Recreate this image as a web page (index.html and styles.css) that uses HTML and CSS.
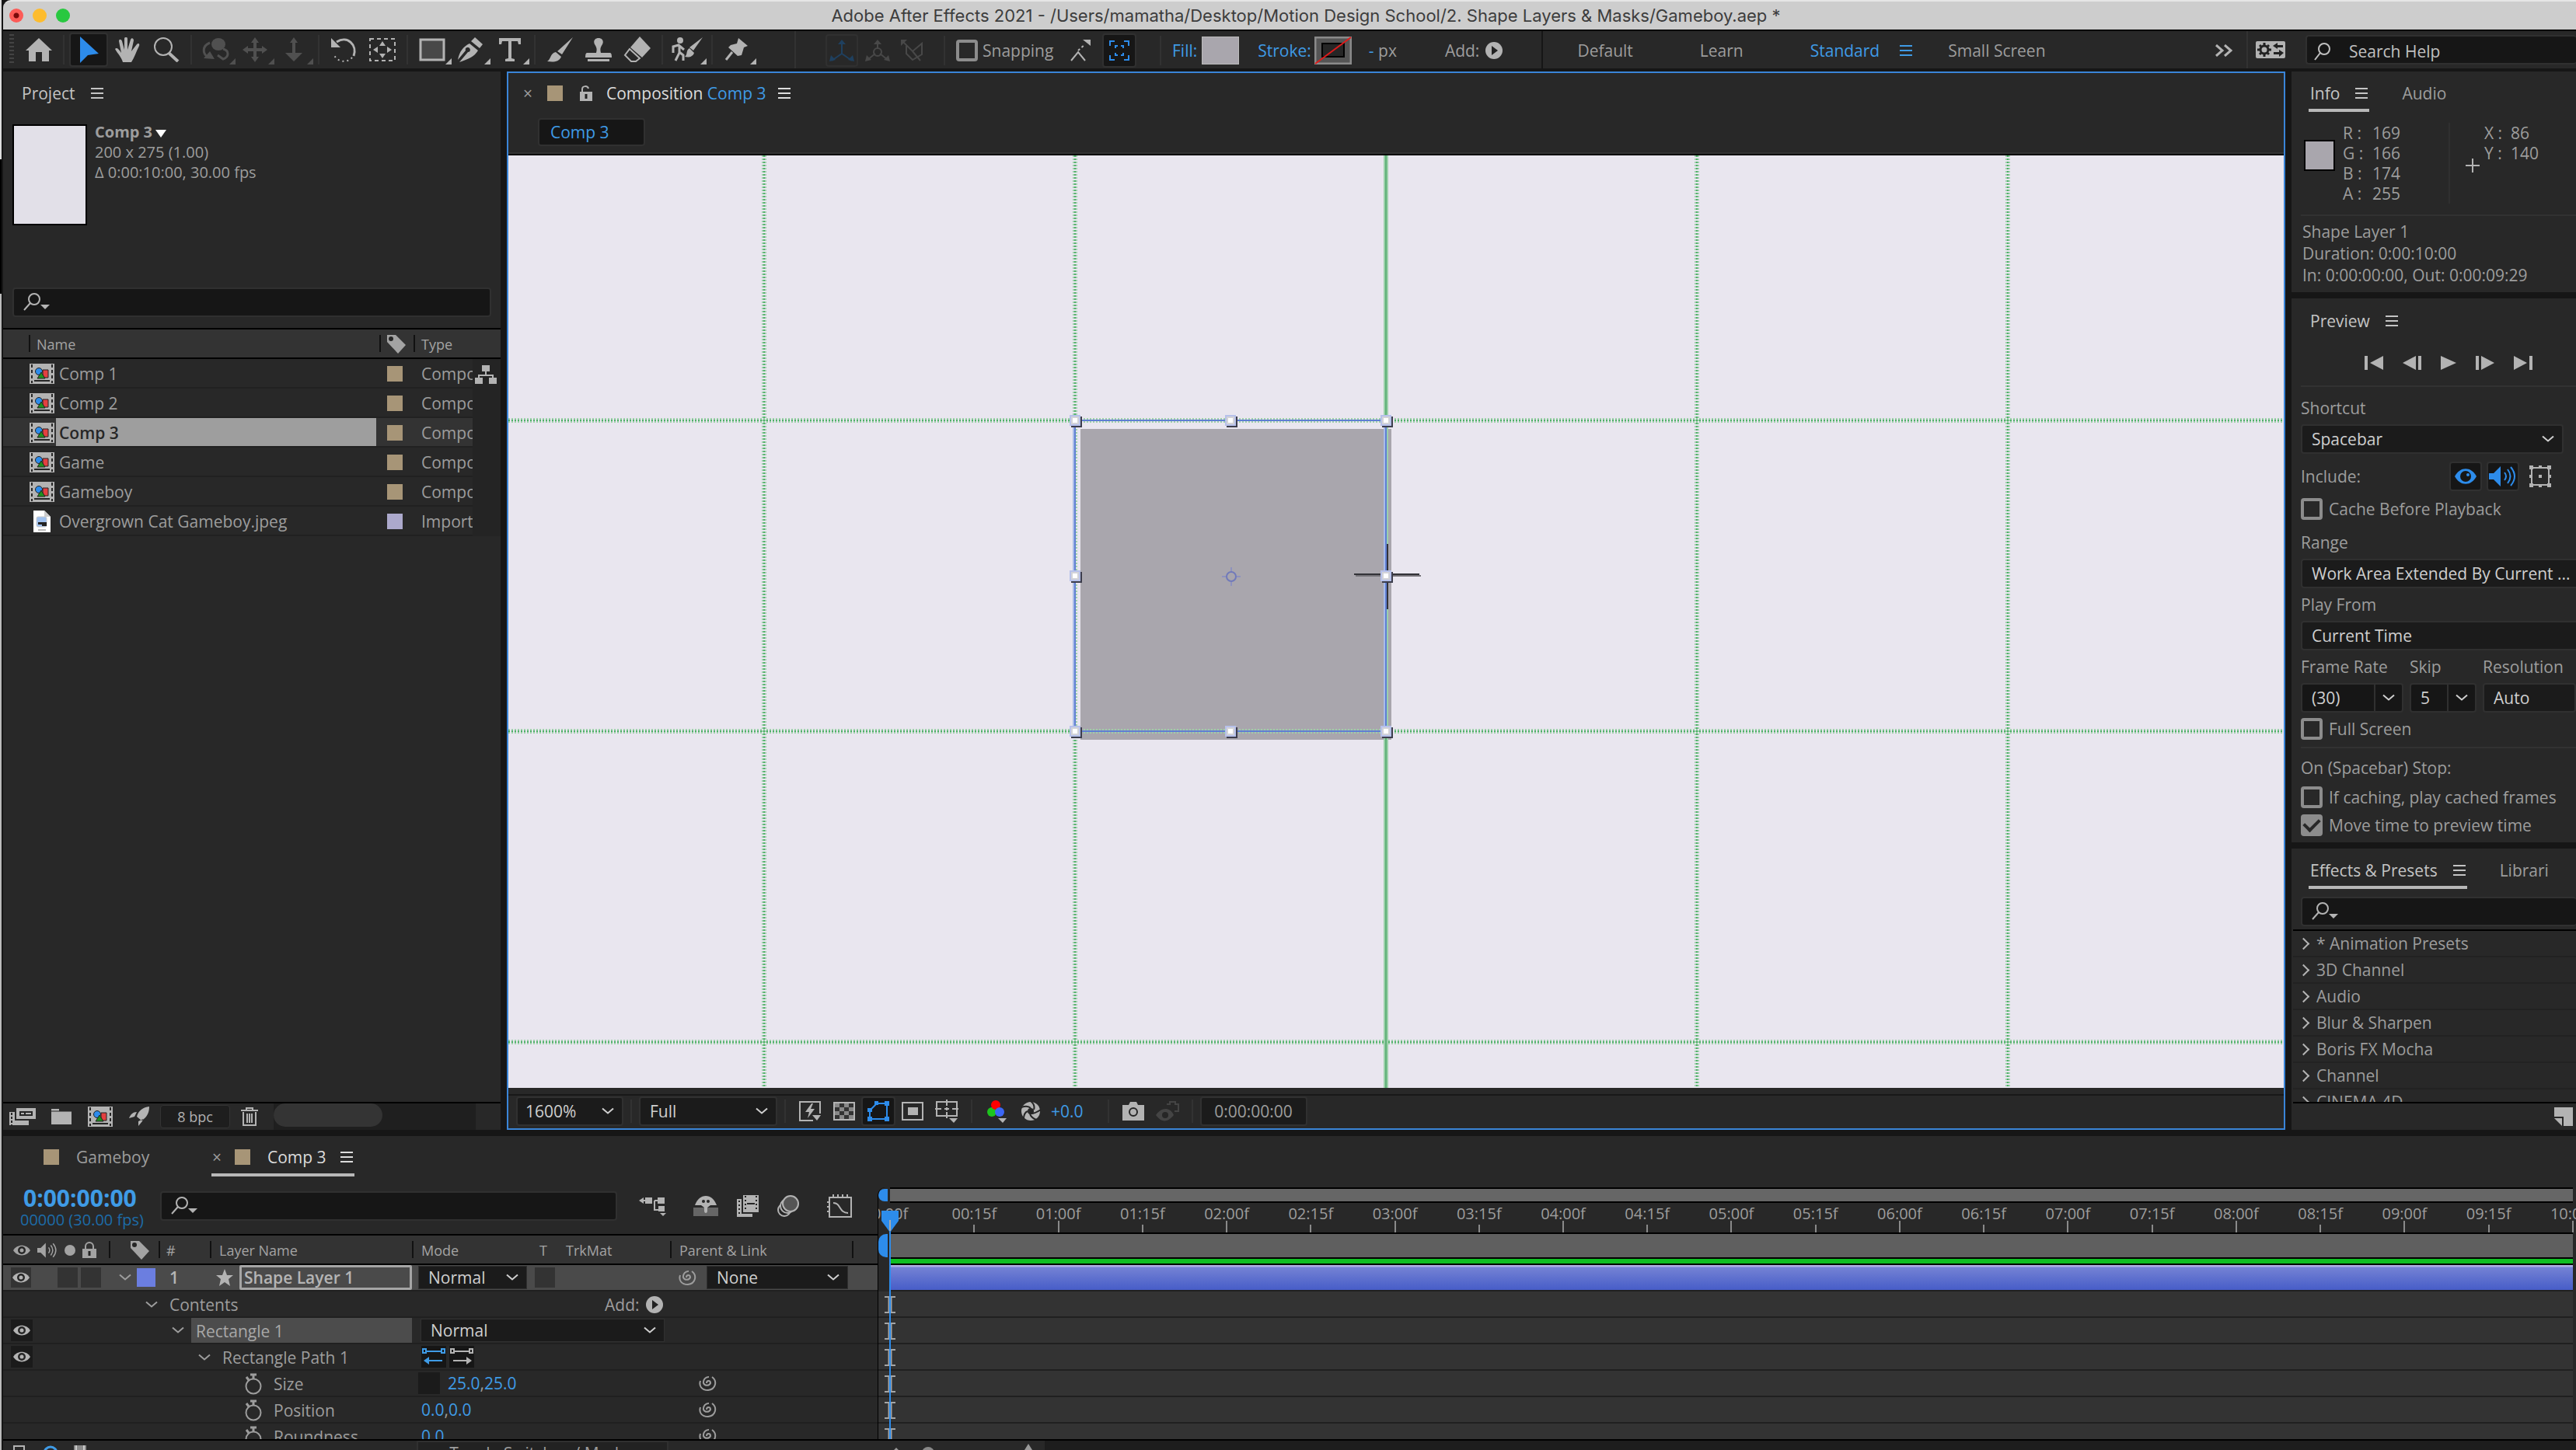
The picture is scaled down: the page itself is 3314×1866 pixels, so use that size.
FILE: index.html
```html
<!DOCTYPE html>
<html lang="en">
<head>
  <meta charset="UTF-8">
  <meta name="viewport" content="width=device-width, initial-scale=1.0">
  <title>Adobe After Effects 2021</title>
  <link rel="stylesheet" href="styles.css">
</head>
<body>
  <!-- shared icons -->
  <svg class="defs" aria-hidden="true">
    <symbol id="menu" viewBox="0 0 16 14"><path d="M0 1h16M0 7h16M0 13h16" stroke="currentColor" stroke-width="2"/></symbol>
    <symbol id="chev" viewBox="0 0 16 10"><path d="M1 1.5l7 6 7-6" fill="none" stroke="currentColor" stroke-width="2"/></symbol>
    <symbol id="search" viewBox="0 0 34 24"><circle cx="14" cy="8" r="7" fill="none" stroke="currentColor" stroke-width="2"/><path d="M9 13L1 22" stroke="currentColor" stroke-width="2"/><path d="M22 15h12l-6 6z" fill="currentColor"/></symbol>
    <symbol id="glass" viewBox="0 0 24 24"><circle cx="14" cy="9" r="7" fill="none" stroke="currentColor" stroke-width="2"/><path d="M9 14L2 23" stroke="currentColor" stroke-width="2"/></symbol>
    <symbol id="comp" viewBox="0 0 32 26"><path d="M0 0h32v26H0z" fill="#b3b3b3"/><path d="M3 1v24M29 1v24" stroke="#262626" stroke-width="2" stroke-dasharray="4 3"/><path d="M6 21h20v2H6z" fill="#262626"/><circle cx="12" cy="10" r="4.500" fill="#2d8ceb" stroke="#222"/><path d="M17 8h7v10h-7z" fill="#e34040" stroke="#222"/><path d="M15 11l5 8H10z" fill="#1f8f1f" stroke="#222"/></symbol>
    <symbol id="eye" viewBox="0 0 22 14"><path d="M0 7C5-1.500 17-1.500 22 7 17 15.500 5 15.500 0 7z" fill="currentColor"/><circle cx="11" cy="7" r="5" fill="#262626"/><circle cx="11" cy="7" r="2.500" fill="currentColor"/></symbol>
    <symbol id="speaker" viewBox="0 0 36 26"><path d="M0 9h6l9-9v26l-9-9H0z" fill="currentColor"/><path d="M20 8q4 5 0 10M24 4q7 9 0 18M28 1q10 12 0 24" fill="none" stroke="currentColor" stroke-width="2"/></symbol>
    <symbol id="tag" viewBox="0 0 24 24"><path d="M0 0h11l13 13-10 11L0 9z" fill="currentColor"/><circle cx="5" cy="5" r="3" fill="#262626"/></symbol>
    <symbol id="lock" viewBox="0 0 18 22"><path d="M0 9h18v12H0z" fill="currentColor"/><path d="M4 10V6a5 5 0 0 1 10 0v4" fill="none" stroke="currentColor" stroke-width="2"/><path d="M9 12v6" stroke="#222" stroke-width="3"/></symbol>
    <symbol id="whip" viewBox="0 0 24 22"><path d="M10 11a2.500 3 0 0 1 5 0a5 5 0 0 1-9 0a6.500 7 0 0 1 7-8M17 3c7 5 5 16-5 17C3 20 0 14 2 8" fill="none" stroke="currentColor" stroke-width="2"/></symbol>
    <symbol id="watch" viewBox="0 0 24 28"><circle cx="12" cy="17" r="9.500" fill="none" stroke="currentColor" stroke-width="2"/><path d="M8 2h8M12 2v6M3 5l3 4" stroke="currentColor" stroke-width="3"/></symbol>
    <symbol id="add" viewBox="0 0 22 22"><circle cx="11" cy="11" r="11" fill="currentColor"/><path d="M8 5l8 6-8 6z" fill="#222"/></symbol>
    <symbol id="corner" viewBox="0 0 8 8"><path d="M8 0v8H0z" fill="currentColor"/></symbol>
    <symbol id="beam" viewBox="0 0 14 22"><path d="M0 1h14M0 21h14" stroke="#a5a5a5" stroke-width="2"/><path d="M7 1v20" stroke="#a5a5a5" stroke-width="5"/></symbol>
    <symbol id="handle" viewBox="0 0 16 16"><path d="M2 2h14v14H2z" fill="#3c3d4c"/><path d="M0 0h14v14H0z" fill="#b7c1ea"/><path d="M2 2h10v10H2z" fill="#d3d3d8"/><path d="M4 4h6v6H4z" fill="#fff"/></symbol>
  </svg>

  <div class="app">
    <header class="titlebar">
      <div class="lights"><span class="light red"></span><span class="light yellow"></span><span class="light green"></span></div>
      <h1>Adobe After Effects 2021 - /Users/mamatha/Desktop/Motion Design School/2. Shape Layers &amp; Masks/Gameboy.aep *</h1>
    </header>

    <!-- tools -->
    <nav class="toolbar">
      <div class="tools">
        <button class="tool" aria-label="Home"><svg width="34" height="30"><path d="M17 0L0 16h4v14h9V18h8v12h9V16h4z" fill="currentColor"/></svg></button>
        <i class="sep"></i>
        <button class="tool active" aria-label="Selection"><svg width="26" height="34"><path d="M2 0l24 22-14 2L2 34z" fill="currentColor"/></svg></button>
        <button class="tool" aria-label="Hand"><svg width="32" height="32"><path d="M10 32C8 25 4 22 0 15c2-2 4-1 8 5L5 5c0-3 3-3 4 0l3 11V2c0-3 4-3 4 0v14l4-13c1-3 4-2 4 1l-3 14 7-9c2-2 4-1 3 2-4 8-6 15-10 21z" fill="currentColor"/></svg></button>
        <button class="tool" aria-label="Zoom"><svg width="34" height="32"><circle cx="13" cy="12" r="11" fill="none" stroke="currentColor" stroke-width="2"/><path d="M20 20l12 11" stroke="currentColor" stroke-width="4"/></svg></button>
        <i class="sep"></i>
        <button class="tool dim" aria-label="Orbit camera"><svg width="36" height="30"><ellipse cx="21" cy="8" rx="9" ry="8" fill="currentColor"/><path d="M10 6C0 10 0 20 8 25M27 14c8 2 8 10 0 13l-7-5" fill="none" stroke="currentColor" stroke-width="3"/><path d="M2 26l14 1-6-10z" fill="currentColor"/></svg><svg class="corner"><use href="#corner"/></svg></button>
        <button class="tool dim" aria-label="Pan camera"><svg width="32" height="32"><path d="M16 0l5 7h-3v7h7v-3l7 5-7 5v-3h-7v7h3l-5 7-5-7h3v-7H7v3l-7-5 7-5v3h7V7h-3z" fill="currentColor"/></svg><svg class="corner"><use href="#corner"/></svg></button>
        <button class="tool dim" aria-label="Dolly camera"><svg width="24" height="32"><path d="M12 0l5 7h-3v13h9l-11 11L1 20h9V7H7z" fill="currentColor"/></svg><svg class="corner"><use href="#corner"/></svg></button>
        <i class="sep"></i>
        <button class="tool" aria-label="Rotation"><svg width="34" height="32"><path d="M8 6c14-9 27 4 22 18" fill="none" stroke="currentColor" stroke-width="3"/><path d="M1 1v12h12z" fill="currentColor"/><path d="M28 26c-7 8-20 6-24-5" fill="none" stroke="currentColor" stroke-width="2" stroke-dasharray="2 4"/></svg></button>
        <button class="tool" aria-label="Anchor point"><svg width="34" height="30"><path d="M1 1h32v28H1z" fill="none" stroke="currentColor" stroke-width="2" stroke-dasharray="5 4"/><path d="M17 4l4 6h-8zM17 26l4-6h-8zM5 15l6-4v8zM29 15l-6-4v8z" fill="currentColor"/></svg></button>
        <i class="sep"></i>
        <button class="tool" aria-label="Rectangle"><svg width="34" height="30"><path d="M2 2h30v26H2z" fill="#484848" stroke="currentColor" stroke-width="3"/></svg><svg class="corner"><use href="#corner"/></svg></button>
        <button class="tool" aria-label="Pen"><svg width="34" height="32"><path d="M22 0l10 9-4 5-11-9zM15 8l11 9c-5 8-12 11-24 15l11-13a3 3 0 1 0-3-2L0 29C2 18 7 12 15 8z" fill="currentColor"/></svg><svg class="corner"><use href="#corner"/></svg></button>
        <button class="tool" aria-label="Type"><svg width="28" height="30"><path d="M0 0h28v8h-3l-1-4h-8v22l4 1v3H8v-3l4-1V4H4L3 8H0z" fill="currentColor"/></svg><svg class="corner"><use href="#corner"/></svg></button>
        <i class="sep"></i>
        <button class="tool" aria-label="Brush"><svg width="34" height="32"><path d="M34 0L20 22l-6-4zM12 19l7 6c-3 7-10 7-18 6 5-3 4-11 11-12z" fill="currentColor"/></svg></button>
        <button class="tool" aria-label="Clone stamp"><svg width="34" height="30"><path d="M17 0c5 0 7 4 5 8-3 5-3 6-2 11h12q2 0 2 6H0q0-6 2-6h12c1-5 1-6-2-11-2-4 0-8 5-8zM3 27h28v3H3z" fill="currentColor"/></svg></button>
        <button class="tool" aria-label="Eraser"><svg width="36" height="34"><path d="M21 0l14 15-11 12L9 14z" fill="currentColor"/><path d="M8 16l13 12-5 4h-6l-8-8z" fill="none" stroke="currentColor" stroke-width="2"/></svg></button>
        <i class="sep"></i>
        <button class="tool" aria-label="Roto brush"><svg width="40" height="32"><circle cx="11" cy="4" r="4" fill="currentColor"/><path d="M2 20V12l7-2 7 6M10 10v10l-5 10M10 19l5 4v7" fill="none" stroke="currentColor" stroke-width="3"/><path d="M40 0L28 17l-5-4zM23 14l6 6c-2 6-8 6-12 5 4-3 1-8 6-11z" fill="currentColor"/></svg><svg class="corner"><use href="#corner"/></svg></button>
        <i class="sep"></i>
        <button class="tool" aria-label="Puppet pin"><svg width="32" height="30"><path d="M18 0l12 10-5 2-3 10-5 1-12-11 3-3 8-2z" fill="currentColor"/><path d="M10 18L2 28" stroke="currentColor" stroke-width="3"/></svg><svg class="corner"><use href="#corner"/></svg></button>
      </div>

      <div class="tool-options">
        <button class="axis framed" aria-label="Local axis"><svg width="32" height="28"><path d="M16 18V4M16 18L3 27M16 18l13 9" stroke="currentColor" stroke-width="2"/><path d="M16 0l5 6H11zM0 28l2-8 6 6zM32 28l-2-8-6 6z" fill="currentColor"/></svg></button>
        <button class="axis" aria-label="World axis"><svg width="32" height="28"><path d="M16 12V4M13 18L3 26M19 18l10 8" stroke="currentColor" stroke-width="2"/><circle cx="16" cy="16" r="5" fill="none" stroke="currentColor" stroke-width="2"/><path d="M16 0l5 6H11zM0 28l2-8 6 6zM32 28l-2-8-6 6z" fill="currentColor"/></svg></button>
        <button class="axis" aria-label="View axis"><svg width="32" height="28"><path d="M3 3l12 12 12-10v14l-12 7-8-8V8M15 15l10 12" fill="none" stroke="currentColor" stroke-width="2"/><path d="M0 0h8L0 8z" fill="currentColor"/></svg></button>
        <i class="sep"></i>
        <label class="check snap"><input type="checkbox"> Snapping</label>
        <button class="icon-btn" aria-label="Snap edges"><svg width="26" height="28"><path d="M1 27l9-11 9 11" fill="none" stroke="currentColor" stroke-width="2"/><path d="M10 14l9-8" stroke="currentColor" stroke-width="2" stroke-dasharray="3 3"/><path d="M16 0h10v8z" fill="currentColor"/></svg></button>
        <button class="icon-btn pressed" aria-label="Snap features"><svg width="26" height="26"><path d="M1 7V1h6M19 1h6v6M25 19v6h-6M7 25H1v-6M8 10V7h3M15 7h3v3M18 16v3h-3M11 19H8v-3" fill="none" stroke="currentColor" stroke-width="2"/></svg></button>
        <i class="sep"></i>
        <a class="blue" href="#">Fill:</a>
        <span class="fill-swatch"></span>
        <a class="blue stroke-link" href="#">Stroke:</a>
        <svg class="stroke-swatch" width="48" height="36"><path d="M1 1h46v34H1z" fill="#555" stroke="#8a8a8a" stroke-width="3"/><path d="M10 9h28v17H10z" fill="#262626" stroke="#000" stroke-width="2"/><path d="M1 35L47 1" stroke="#e01b1b" stroke-width="2"/></svg>
        <span class="px"><a class="blue" href="#">-</a> px</span>
        <span class="add-label">Add: <svg width="22" height="22"><use href="#add"/></svg></span>
      </div>

      <div class="workspaces">
        <button class="ws ws-default">Default</button>
        <button class="ws ws-learn">Learn</button>
        <button class="ws ws-standard blue">Standard <svg width="16" height="14"><use href="#menu"/></svg></button>
        <button class="ws">Small Screen</button>
        <button class="ws more" aria-label="More workspaces"><svg width="22" height="16"><path d="M1 1l8 7-8 7M12 1l8 7-8 7" fill="none" stroke="currentColor" stroke-width="3"/></svg></button>
      </div>
      <div class="help">
        <button class="sync" aria-label="Workspace settings"><svg width="38" height="22"><rect width="38" height="22" rx="2" fill="#b3b3b3"/><circle cx="11" cy="11" r="5" fill="none" stroke="#222" stroke-width="3"/><path d="M11 2v3M11 17v3M2 11h3M17 11h3M5 5l2 2M17 5l-2 2M5 17l2-2M17 17l-2-2" stroke="#222" stroke-width="3"/><path d="M22 6l6-4v3h7v3h-7v2zM36 15l-6-4v3h-7v3h7v3z" fill="#222"/></svg></button>
        <label class="field help-field"><svg width="24" height="24"><use href="#glass"/></svg><input type="text" value="Search Help" aria-label="Search Help"></label>
      </div>
    </nav>

    <main class="workspace">
      <!-- project -->
      <section class="panel project">
        <div class="tabs"><h2 class="tab">Project <svg width="16" height="14"><use href="#menu"/></svg></h2></div>
        <div class="summary">
          <div class="thumb"></div>
          <div class="meta">
            <strong>Comp 3</strong><svg width="14" height="10"><path d="M0 0h14L7 10z" fill="#fff"/></svg><br>
            200 x 275 (1.00)<br>
            Δ 0:00:10:00, 30.00 fps
          </div>
        </div>
        <label class="field project-search"><svg width="34" height="24"><use href="#search"/></svg><input type="text" aria-label="Search project"></label>
        <table class="files">
          <colgroup><col class="f-icon"><col><col class="f-tag"><col class="f-type"><col class="f-flow"></colgroup>
          <thead>
            <tr><th></th><th>Name</th><th><svg width="24" height="24"><use href="#tag"/></svg></th><th colspan="2">Type</th></tr>
          </thead>
          <tbody>
            <tr><td><svg width="32" height="26"><use href="#comp"/></svg></td><td>Comp 1</td><td><span class="chip"></span></td><td>Composition</td><td class="flow"><svg width="28" height="24"><path d="M9 0h10v8H9zM0 16h10v8H0zM18 16h10v8H18z" fill="#b3b3b3"/><path d="M14 8v5M5 17v-4h18v4" fill="none" stroke="#b3b3b3" stroke-width="2"/></svg></td></tr>
            <tr><td><svg width="32" height="26"><use href="#comp"/></svg></td><td>Comp 2</td><td><span class="chip"></span></td><td>Composition</td><td></td></tr>
            <tr class="selected"><td><svg width="32" height="26"><use href="#comp"/></svg></td><td>Comp 3</td><td><span class="chip"></span></td><td>Composition</td><td></td></tr>
            <tr><td><svg width="32" height="26"><use href="#comp"/></svg></td><td>Game</td><td><span class="chip"></span></td><td>Composition</td><td></td></tr>
            <tr><td><svg width="32" height="26"><use href="#comp"/></svg></td><td>Gameboy</td><td><span class="chip"></span></td><td>Composition</td><td></td></tr>
            <tr><td><svg width="32" height="28"><path d="M5 0h14l8 8v20H5z" fill="#fff"/><path d="M19 0v8h8z" fill="#ccc"/><rect x="9" y="8" width="13" height="13" rx="2" fill="#9ec0ee" stroke="#ccc"/><path d="M11 15h11v3H11zM16 18h6v2h-6z" fill="#222"/><path d="M11 25h10" stroke="#bbb" stroke-width="2"/></svg></td><td>Overgrown Cat Gameboy.jpeg</td><td><span class="chip lilac"></span></td><td>Import</td><td></td></tr>
          </tbody>
        </table>
        <div class="files-space"></div>
        <div class="project-foot">
          <button aria-label="Interpret footage"><svg width="34" height="22"><path d="M9 0h25v14H9z" fill="#b3b3b3"/><path d="M13 4h17v6H13z" fill="#262626"/><path d="M15 6h4v2h-4zM21 6h7v2h-7z" fill="#b3b3b3"/><path d="M0 5h7v11h18v6H0z" fill="#b3b3b3"/><path d="M3 6v16" stroke="#262626" stroke-width="2" stroke-dasharray="3 2"/></svg></button>
          <button aria-label="New folder"><svg width="26" height="20"><path d="M0 0h10v3h16v17H0z" fill="#b3b3b3"/><path d="M0 3h26" stroke="#262626"/></svg></button>
          <button aria-label="New composition"><svg width="34" height="26"><use href="#comp"/></svg></button>
          <button aria-label="Project settings"><svg width="26" height="26"><path d="M26 0c-8 1-14 5-16 13l6 5c7-4 10-10 10-18zM10 7C5 7 2 10 0 15l7-2zM18 16l-1 3-5 6v-6z" fill="#b3b3b3"/></svg></button>
          <button class="bpc">8 bpc</button>
          <button aria-label="Delete"><svg width="22" height="24"><path d="M0 4h22M7 3V1h8v2M3 6v17h16V6M8 8v12M11 8v12M14 8v12" fill="none" stroke="#b3b3b3" stroke-width="2"/></svg></button>
          <div class="track"><div class="thumbbar"></div></div>
        </div>
      </section>

      <!-- composition viewer -->
      <section class="panel viewer">
        <div class="viewer-tab">
          <button class="close" aria-label="Close">×</button>
          <span class="chip tab-chip"></span>
          <svg class="unlock" width="16" height="20"><path d="M0 8h16v12H0z" fill="#b3b3b3"/><path d="M3 9V5c0-5 7-5 8-1" fill="none" stroke="#b3b3b3" stroke-width="2"/><path d="M8 11v6" stroke="#222" stroke-width="3"/></svg>
          <h2>Composition <a class="blue" href="#">Comp 3</a></h2>
          <svg width="16" height="14"><use href="#menu"/></svg>
        </div>
        <div class="crumbs"><button class="crumb">Comp 3</button></div>
        <div class="stage">
          <svg viewBox="0 0 2284 1200" preserveAspectRatio="xMidYMid slice">
            <path d="M0 0h2284v1200H0z" fill="#e9e6ef"/>
            <path d="M736 352h400v400H736z" fill="#a9a6ad"/>
            <g fill="none" stroke="#9dd0aa" stroke-width="6" stroke-dasharray="2 2"><path d="M329 0v1200M729 0v1200M1529 0v1200M1929 0v1200M0 341h2284M0 741h2284M0 1141h2284"/></g>
            <g fill="none" stroke="#4fae68" stroke-width="2" stroke-dasharray="2 2"><path d="M329 0v1200M729 0v1200M1529 0v1200M1929 0v1200M0 341h2284M0 741h2284M0 1141h2284"/></g>
            <path d="M1129 0v1200" stroke="#9dd0aa" stroke-width="6"/>
            <path d="M1129 0v1200" stroke="#5fb078" stroke-width="2"/>
            <path d="M729 341h400v400H729z" fill="none" stroke="#5f7fd3" stroke-width="2"/>
            <path d="M727 341v400M1127 341v400" stroke="#a9bce8" stroke-width="2"/>
            <path d="M1088 539h84M1131 500v84" stroke="#333338" stroke-width="2"/>
            <path d="M1090 541h84" stroke="#747278" stroke-width="2"/>
            <circle cx="930" cy="542" r="6" fill="none" stroke="#7079ba" stroke-width="2"/>
            <path d="M930 530v5M930 549v5M918 542h5M937 542h5" stroke="#8e92bd" stroke-width="2"/>
            <g>
              <use href="#handle" x="722" y="334" width="16" height="16"/><use href="#handle" x="922" y="334" width="16" height="16"/><use href="#handle" x="1122" y="334" width="16" height="16"/>
              <use href="#handle" x="722" y="534" width="16" height="16"/><use href="#handle" x="1122" y="534" width="16" height="16"/>
              <use href="#handle" x="722" y="734" width="16" height="16"/><use href="#handle" x="922" y="734" width="16" height="16"/><use href="#handle" x="1122" y="734" width="16" height="16"/>
            </g>
          </svg>
        </div>
        <div class="viewer-foot">
          <span class="select zoom-select"><select aria-label="Magnification"><option>1600%</option></select><svg width="16" height="10"><use href="#chev"/></svg></span>
          <i class="sep"></i>
          <span class="select res-select"><select aria-label="Resolution"><option>Full</option></select><svg width="16" height="10"><use href="#chev"/></svg></span>
          <i class="sep"></i>
          <button class="vbtn" aria-label="Fast previews"><svg width="28" height="26"><path d="M18 25H1V1h26v15" fill="none" stroke="currentColor" stroke-width="2"/><path d="M16 3L8 14h5l-2 8 9-12h-5l3-7z" fill="currentColor"/><path d="M17 18h11l-5 7z" fill="currentColor"/></svg></button>
          <button class="vbtn" aria-label="Transparency grid"><svg width="28" height="24"><path d="M1 1h26v22H1z" fill="#333" stroke="currentColor" stroke-width="2"/><path d="M2 2h6v5H2zM14 2h6v5h-6zM8 7h6v5H8zM20 7h6v5h-6zM2 12h6v5H2zM14 12h6v5h-6zM8 17h6v5H8zM20 17h6v5h-6z" fill="#888"/></svg></button>
          <button class="vbtn pressed" aria-label="Mask visibility"><svg width="30" height="26"><path d="M4 23V12l9-9h13v20z" fill="none" stroke="currentColor" stroke-width="2"/><path d="M1 20h6v6H1zM1 9h6v5H1zM10 0h5v5h-5zM23 0h6v6h-6zM23 20h6v6h-6z" fill="currentColor"/></svg></button>
          <button class="vbtn" aria-label="Region of interest"><svg width="28" height="24"><path d="M1 1h26v22H1z" fill="none" stroke="currentColor" stroke-width="2"/><path d="M8 7h13v10H8z" fill="currentColor"/></svg></button>
          <button class="vbtn" aria-label="Grid and guides"><svg width="30" height="30"><path d="M2 3h26v18H2zM15 0v8M15 16v8M0 12h8M22 12h8M15 10v4M12 12h6" fill="none" stroke="currentColor" stroke-width="2"/><path d="M18 24h11l-5 6z" fill="currentColor"/></svg></button>
          <i class="sep"></i>
          <button class="vbtn" aria-label="Channels"><svg width="26" height="30"><circle cx="7" cy="16" r="6" fill="#1dc41d"/><circle cx="12" cy="7" r="6" fill="#f00"/><circle cx="17" cy="16" r="6" fill="#3b66f5"/><path d="M15 24h11l-5 6z" fill="currentColor"/></svg></button>
          <button class="vbtn" aria-label="Reset exposure"><svg width="26" height="26"><circle cx="13" cy="13" r="12" fill="currentColor"/><circle cx="13" cy="13" r="4" fill="#262626"/><path d="M13 0q6 5 4 11M26 11q-8 5-12 5M20 24q-7-3-8-8M4 23q0-8 5-10M1 8q8-3 12 1" fill="none" stroke="#262626" stroke-width="2"/></svg></button>
          <a class="blue exposure" href="#">+0.0</a>
          <i class="sep"></i>
          <button class="vbtn" aria-label="Take snapshot"><svg width="28" height="24"><path d="M0 4h8l2-4h8l2 4h8v20H0z" fill="currentColor"/><circle cx="14" cy="13" r="5" fill="none" stroke="#262626" stroke-width="2"/></svg></button>
          <button class="vbtn dim" aria-label="Show snapshot"><svg width="30" height="26"><path d="M0 18q6-9 14-8 6 1 9 8-12 15-23 0z" fill="currentColor"/><circle cx="12" cy="18" r="4" fill="#262626"/><path d="M14 4h4V1h7v3h4v9h-5" fill="none" stroke="currentColor" stroke-width="2"/></svg></button>
          <i class="sep"></i>
          <button class="timecode-btn">0:00:00:00</button>
        </div>
      </section>

      <aside class="side">
        <!-- info -->
        <section class="panel info">
          <div class="tabs"><h2 class="tab on">Info <svg width="16" height="14"><use href="#menu"/></svg></h2><h2 class="tab off">Audio</h2></div>
          <div class="info-body">
            <span class="sample"></span>
            <dl class="rgba"><dt>R :</dt><dd>169</dd><dt>G :</dt><dd>166</dd><dt>B :</dt><dd>174</dd><dt>A :</dt><dd>255</dd></dl>
            <svg class="plus" width="18" height="18"><path d="M9 0v18M0 9h18" stroke="#b3b3b3" stroke-width="2"/></svg>
            <dl class="xy"><dt>X :</dt><dd>86</dd><dt>Y :</dt><dd>140</dd></dl>
          </div>
          <p class="info-text">Shape Layer 1<br>Duration: 0:00:10:00<br>In: 0:00:00:00, Out: 0:00:09:29</p>
        </section>

        <!-- preview -->
        <section class="panel preview">
          <div class="tabs"><h2 class="tab">Preview <svg width="16" height="14"><use href="#menu"/></svg></h2></div>
          <div class="transport">
            <button aria-label="First frame"><svg width="24" height="18"><path d="M0 0h4v18H0zM24 0v18L7 9z" fill="#b3b3b3"/></svg></button>
            <button aria-label="Previous frame"><svg width="24" height="18"><path d="M17 0v18L0 9zM20 0h4v18h-4z" fill="#b3b3b3"/></svg></button>
            <button aria-label="Play"><svg width="20" height="18"><path d="M0 0l20 9-20 9z" fill="#b3b3b3"/></svg></button>
            <button aria-label="Next frame"><svg width="24" height="18"><path d="M0 0h4v18H0zM7 0l17 9-17 9z" fill="#b3b3b3"/></svg></button>
            <button aria-label="Last frame"><svg width="24" height="18"><path d="M0 0l17 9-17 9zM20 0h4v18h-4z" fill="#b3b3b3"/></svg></button>
          </div>
          <div class="preview-form">
            <label for="shortcut">Shortcut</label>
            <span class="select tall"><select id="shortcut"><option>Spacebar</option></select><svg width="16" height="10"><use href="#chev"/></svg></span>
            <div class="include">
              <span>Include:</span>
              <button class="inc pressed" aria-label="Video"><svg width="28" height="20" viewBox="0 0 28 20"><path d="M0 10C7-3 21-3 28 10 21 23 7 23 0 10z" fill="currentColor"/><circle cx="14" cy="10" r="7" fill="#161616"/><circle cx="17" cy="8" r="2" fill="currentColor"/></svg></button>
              <button class="inc pressed" aria-label="Audio"><svg width="36" height="26"><use href="#speaker"/></svg></button>
              <button class="inc plain" aria-label="Overlays"><svg width="28" height="28"><path d="M3 3h22v22H3z" fill="none" stroke="currentColor" stroke-width="2"/><path d="M0 0h5v5H0zM23 0h5v5h-5zM0 23h5v5H0zM23 23h5v5h-5zM12 0h4v4h-4zM12 24h4v4h-4zM0 12h4v4H0zM24 12h4v4h-4zM12 12h4v4h-4z" fill="currentColor"/></svg></button>
            </div>
            <label class="check cache"><input type="checkbox"> Cache Before Playback</label>
            <label for="range">Range</label>
            <span class="select wide"><select id="range"><option>Work Area Extended By Current ...</option></select></span>
            <label for="playfrom">Play From</label>
            <span class="select wide"><select id="playfrom"><option>Current Time</option></select></span>
            <div class="rates">
              <div class="rate"><label for="rate">Frame Rate</label><span class="combo"><input id="rate" type="text" value="(30)"><button aria-label="Frame rates"><svg width="16" height="10"><use href="#chev"/></svg></button></span></div>
              <div class="skip"><label for="skip">Skip</label><span class="combo"><input id="skip" type="text" value="5"><button aria-label="Skip values"><svg width="16" height="10"><use href="#chev"/></svg></button></span></div>
              <div class="reso"><label for="reso">Resolution</label><span class="select"><select id="reso"><option>Auto</option></select></span></div>
            </div>
            <label class="check full"><input type="checkbox"> Full Screen</label>
            <p class="on-stop">On (Spacebar) Stop:</p>
            <label class="check stop"><input type="checkbox"> If caching, play cached frames</label>
            <label class="check stop"><input type="checkbox" checked> Move time to preview time</label>
          </div>
        </section>

        <!-- effects -->
        <section class="panel effects">
          <div class="tabs"><h2 class="tab on">Effects &amp; Presets <svg width="16" height="14"><use href="#menu"/></svg></h2><h2 class="tab off">Librari</h2></div>
          <label class="field effects-search"><svg width="34" height="24"><use href="#search"/></svg><input type="text" aria-label="Search effects"></label>
          <ul class="effect-list">
            <li>* Animation Presets</li>
            <li>3D Channel</li>
            <li>Audio</li>
            <li>Blur &amp; Sharpen</li>
            <li>Boris FX Mocha</li>
            <li>Channel</li>
            <li>CINEMA 4D</li>
          </ul>
          <div class="effects-foot"><button aria-label="New preset"><svg width="24" height="24"><path d="M0 0h24v24H12V12H0z" fill="#b3b3b3"/><path d="M0 14h10v10z" fill="#b3b3b3"/></svg></button></div>
        </section>
      </aside>
    </main>

    <!-- timeline -->
    <section class="panel timeline">
      <div class="tl-tabs">
        <div class="tl-tab gameboy"><span class="chip tab-chip"></span>Gameboy</div>
        <div class="tl-tab current"><button class="close" aria-label="Close">×</button><span class="chip tab-chip"></span>Comp 3<svg width="16" height="14"><use href="#menu"/></svg></div>
      </div>
      <div class="tl-body">
        <div class="layers">
          <div class="tl-controls">
            <div class="clock"><strong>0:00:00:00</strong><span>00000 (30.00 fps)</span></div>
            <label class="field layer-search"><svg width="34" height="24"><use href="#search"/></svg><input type="text" aria-label="Search layers"></label>
            <div class="tl-icons">
              <button class="flow-btn" aria-label="Mini flowchart"><svg width="38" height="26"><path d="M4 6h12M20 6h12M20 6v12h10" fill="none" stroke="currentColor" stroke-width="2"/><path d="M0 6l6-4v8zM8 2h9v8H8zM24 2h9v8h-9zM25 13h8v7h-8zM27 22h8l-4 4z" fill="currentColor"/></svg></button>
              <button aria-label="Shy"><svg width="32" height="26"><path d="M0 15h32v11H0z" fill="#666"/><path d="M2 12C5 4 10 0 16 0s11 4 14 12h-8l-4 3v4q0 3-2 3t-2-3v-4l-4-3z" fill="currentColor"/><circle cx="13" cy="7" r="2" fill="#262626"/><circle cx="19" cy="7" r="2" fill="#262626"/></svg></button>
              <button aria-label="Frame blending"><svg width="28" height="28"><path d="M8 0h20v22H8z" fill="currentColor"/><path d="M0 5h6v19h14v4H0z" fill="currentColor"/><path d="M11 1v20M25 1v20M3 7v20" stroke="#262626" stroke-width="2" stroke-dasharray="2 3"/><path d="M13 10h10v2H13z" fill="#262626"/></svg></button>
              <button aria-label="Motion blur"><svg width="28" height="28"><circle cx="9" cy="19" r="8" fill="#262626" stroke="currentColor" stroke-width="2"/><circle cx="13" cy="14" r="9" fill="#262626" stroke="currentColor" stroke-width="2"/><circle cx="17" cy="11" r="10" fill="#555" stroke="currentColor" stroke-width="2"/></svg></button>
              <button class="graph-btn" aria-label="Graph editor"><svg width="34" height="32"><path d="M3 5h28v25H3zM8 1v4M14 1v4M20 1v4M26 1v4M0 11h3M0 17h3M0 23h3" fill="none" stroke="currentColor" stroke-width="2"/><path d="M8 12c10 0 7 13 19 13" fill="none" stroke="currentColor" stroke-width="2"/></svg></button>
            </div>
          </div>
          <table class="layer-table">
            <colgroup><col class="l-switch"><col class="l-tag"><col class="l-num"><col class="l-name"><col class="l-mode"><col class="l-parent"><col></colgroup>
            <thead>
              <tr>
                <th><div class="switches"><svg width="22" height="14"><use href="#eye"/></svg><svg width="26" height="22"><use href="#speaker"/></svg><svg width="14" height="14"><circle cx="7" cy="7" r="7" fill="currentColor"/></svg><svg width="18" height="22"><use href="#lock"/></svg></div></th>
                <th class="tag-head"><svg width="24" height="24"><use href="#tag"/></svg></th>
                <th>#</th><th>Layer Name</th>
                <th><div class="mode-head"><span>Mode</span><span>T</span><span>TrkMat</span></div></th>
                <th>Parent &amp; Link</th><th></th>
              </tr>
            </thead>
            <tbody>
              <tr class="layer-row">
                <td><div class="cells"><span class="cell"><svg width="22" height="14"><use href="#eye"/></svg></span><span class="cell solo"></span><span class="cell"></span></div></td>
                <td><div class="label-cell"><svg width="16" height="10"><use href="#chev"/></svg><span class="label-chip"></span></div></td>
                <td class="num">1</td>
                <td><div class="name-cell"><svg width="22" height="22"><path d="M11 0l3 8h8l-6 5 2 9-7-5-7 5 2-9-6-5h8z" fill="#b3b3b3"/></svg><input type="text" value="Shape Layer 1" aria-label="Layer name"></div></td>
                <td><div class="mode-cell"><span class="select flat blend"><select aria-label="Blending mode"><option>Normal</option></select><svg width="16" height="10"><use href="#chev"/></svg></span><span class="cell"></span></div></td>
                <td colspan="2"><div class="parent-cell"><svg width="24" height="22"><use href="#whip"/></svg><span class="select flat parent"><select aria-label="Parent"><option>None</option></select><svg width="16" height="10"><use href="#chev"/></svg></span></div></td>
              </tr>
              <tr>
                <td></td>
                <td colspan="3"><div class="prop d1"><svg width="16" height="10"><use href="#chev"/></svg>Contents</div></td>
                <td><div class="add-cell">Add: <svg width="22" height="22"><use href="#add"/></svg></div></td>
                <td colspan="2"></td>
              </tr>
              <tr>
                <td><div class="cells"><span class="cell dark"><svg width="22" height="14"><use href="#eye"/></svg></span></div></td>
                <td colspan="3"><div class="prop d2"><svg width="16" height="10"><use href="#chev"/></svg><span class="picked">Rectangle 1</span></div></td>
                <td><div class="mode-cell"><span class="select flat long"><select aria-label="Group blending mode"><option>Normal</option></select><svg width="16" height="10"><use href="#chev"/></svg></span></div></td>
                <td colspan="2"></td>
              </tr>
              <tr>
                <td><div class="cells"><span class="cell dark"><svg width="22" height="14"><use href="#eye"/></svg></span></div></td>
                <td colspan="3"><div class="prop d3"><svg width="16" height="10"><use href="#chev"/></svg>Rectangle Path 1</div></td>
                <td><div class="dirs"><button class="blue" aria-label="Reverse path off"><svg width="30" height="22"><path d="M1 1h4v5H1zM25 1h4v5h-4zM5 4h20M8 16h18" fill="none" stroke="currentColor" stroke-width="2"/><path d="M2 16l7-5v10z" fill="currentColor"/></svg></button><button aria-label="Reverse path on"><svg width="30" height="22"><path d="M1 1h4v5H1zM25 1h4v5h-4zM5 4h20M4 16h18" fill="none" stroke="currentColor" stroke-width="2"/><path d="M28 16l-7-5v10z" fill="currentColor"/></svg></button></div></td>
                <td colspan="2"></td>
              </tr>
              <tr>
                <td></td>
                <td colspan="3"><div class="prop d4"><svg width="24" height="28"><use href="#watch"/></svg>Size</div></td>
                <td><div class="value"><span class="link-box"></span><a class="blue" href="#">25.0</a>,<a class="blue" href="#">25.0</a></div></td>
                <td colspan="2"><div class="whip"><svg width="24" height="22"><use href="#whip"/></svg></div></td>
              </tr>
              <tr>
                <td></td>
                <td colspan="3"><div class="prop d4"><svg width="24" height="28"><use href="#watch"/></svg>Position</div></td>
                <td><div class="value"><a class="blue" href="#">0.0</a>,<a class="blue" href="#">0.0</a></div></td>
                <td colspan="2"><div class="whip"><svg width="24" height="22"><use href="#whip"/></svg></div></td>
              </tr>
              <tr>
                <td></td>
                <td colspan="3"><div class="prop d4"><svg width="24" height="28"><use href="#watch"/></svg>Roundness</div></td>
                <td><div class="value"><a class="blue" href="#">0.0</a></div></td>
                <td colspan="2"><div class="whip"><svg width="24" height="22"><use href="#whip"/></svg></div></td>
              </tr>
            </tbody>
          </table>
        </div>

        <div class="graph">
          <div class="navigator"><span class="grip"></span></div>
          <div class="ruler">
            <div class="ticks">
              <span>0:00f</span><span>00:15f</span><span>01:00f</span><span>01:15f</span><span>02:00f</span><span>02:15f</span><span>03:00f</span><span>03:15f</span><span>04:00f</span><span>04:15f</span><span>05:00f</span><span>05:15f</span><span>06:00f</span><span>06:15f</span><span>07:00f</span><span>07:15f</span><span>08:00f</span><span>08:15f</span><span>09:00f</span><span>09:15f</span><span>10:00f</span>
            </div>
          </div>
          <div class="workarea"><span class="grip"></span></div>
          <div class="cached"></div>
          <div class="lane bar"></div>
          <div class="lane"><svg width="14" height="22"><use href="#beam"/></svg></div>
          <div class="lane"><svg width="14" height="22"><use href="#beam"/></svg></div>
          <div class="lane"><svg width="14" height="22"><use href="#beam"/></svg></div>
          <div class="lane"><svg width="14" height="22"><use href="#beam"/></svg></div>
          <div class="lane"><svg width="14" height="22"><use href="#beam"/></svg></div>
          <div class="lane"><svg width="14" height="22"><use href="#beam"/></svg></div>
          <div class="playhead"><svg width="22" height="28"><path d="M0 0h22v13L11 28 0 13z" fill="#2d8ceb"/><path d="M11 12v14" stroke="#aaa" stroke-width="2"/></svg></div>
        </div>
      </div>
      <div class="tl-foot">
        <button aria-label="Layer switches"><svg width="20" height="20"><path d="M1 1h13v13H1zM7 7h12v12H7z" fill="none" stroke="#b3b3b3" stroke-width="2"/></svg></button>
        <button class="blue" aria-label="Transfer controls"><svg width="20" height="20"><circle cx="10" cy="10" r="8" fill="none" stroke="currentColor" stroke-width="3"/></svg></button>
        <button aria-label="In and out"><svg width="16" height="20"><path d="M0 0h16v20H0z" fill="#8a8a8a"/><path d="M3 0v20M13 0v20" stroke="#ccc" stroke-width="2"/></svg></button>
        <button class="toggle">Toggle Switches / Modes</button>
        <div class="zoom-slider"><svg width="190" height="16"><path d="M4 12l3-3 3 3zM172 12l5-8 5 8z" fill="#999"/><circle cx="48" cy="16" r="8" fill="#888"/></svg></div>
        <div class="tl-track"></div>
      </div>
    </section>
  </div>
</body>
</html>
```
FILE: styles.css
```css
* {
  box-sizing: border-box;
}
body {
  margin: 0;
  height: 100vh;
  padding-left: 4px;
  overflow: hidden;
  background: linear-gradient(#ddd 205px, #000 205px, #000 378px, #bbb 378px) 0 0 / 2px 100% no-repeat #161616;
  font-family: "Open Sans", "Noto Sans", sans-serif;
  font-size: 21px;
  line-height: 26px;
  color: #9d9d9d;
}
svg {
  display: block;
  flex: none;
}
.defs {
  position: absolute;
  width: 0;
  height: 0;
}
h1, h2, p, dl, dd, ul {
  margin: 0;
  padding: 0;
}
h1, h2 {
  font-size: 21px;
  font-weight: 400;
}
button, input, select {
  font: inherit;
  color: inherit;
  margin: 0;
  padding: 0;
  border: none;
  background: none;
  outline: none;
}
button {
  display: flex;
  align-items: center;
  justify-content: center;
  flex: none;
}
a {
  text-decoration: none;
}
.blue {
  color: #3f9be6;
}
.app {
  height: 100vh;
  display: flex;
  flex-direction: column;
}
.panel {
  background: #282828;
  display: flex;
  flex-direction: column;
  overflow: hidden;
}

/* title bar */
.titlebar {
  height: 38px;
  flex: none;
  display: grid;
  grid-template-columns: 1fr auto 1fr;
  align-items: center;
  background: #cdcdcd;
  border-top: 2px solid #e6e6e6;
  border-top-left-radius: 10px;
  color: #3d3d3d;
}
.titlebar h1 {
  font-family: Inter, sans-serif;
  font-size: 22px;
  padding-left: 42px;
}
.lights {
  display: flex;
  gap: 12px;
  padding-left: 8px;
}
.light {
  width: 18px;
  height: 18px;
  border-radius: 50%;
}
.red {
  background: radial-gradient(circle, #7a0a0a 3px, #fc5b57 4px);
}
.yellow {
  background: #fdbc2e;
}
.green {
  background: #28c840;
}

/* toolbar */
.toolbar {
  height: 50px;
  flex: none;
  display: flex;
  align-items: center;
  background: #282828;
  border-top: 2px solid #000;
  margin-bottom: 4px;
  white-space: nowrap;
}
.tools {
  display: flex;
  align-items: center;
  padding-left: 21px;
  padding-right: 49px;
  height: 100%;
  background: repeating-linear-gradient(#444 0 2px, transparent 2px 5px) 8px 4px / 6px 38px no-repeat;
}
.tool {
  width: 50px;
  height: 44px;
  position: relative;
  color: #b3b3b3;
}
.tool.active {
  color: #2d8ceb;
  background: #161616;
  border: 2px solid #303030;
  border-radius: 4px;
}
.tool.dim {
  color: #505050;
}
.tool .corner {
  position: absolute;
  right: 0;
  bottom: 3px;
  width: 8px;
  height: 8px;
}
.sep {
  width: 2px;
  height: 38px;
  margin: 0 6px;
  background: #323232;
  flex: none;
}
.tool-options {
  display: flex;
  align-items: center;
  height: 100%;
  padding-top: 2px;
  padding-left: 38px;
  border-left: 2px solid #323232;
}
.axis {
  width: 42px;
  height: 42px;
  margin-right: 4px;
  color: #484848;
}
.axis.framed {
  color: #1f405f;
  border: 2px solid #303030;
  border-radius: 4px;
}
.tool-options > .sep {
  margin: 0 14px;
}
.check {
  display: flex;
  align-items: center;
  gap: 8px;
  height: 36px;
}
.check input {
  appearance: none;
  width: 28px;
  height: 28px;
  flex: none;
  border: 4px solid #8c8c8c;
  border-radius: 4px;
}
.check input:checked {
  background: #8c8c8c;
  display: flex;
  align-items: center;
  justify-content: center;
}
.check input:checked::after {
  content: "";
  width: 17px;
  height: 9px;
  border: solid #282828;
  border-width: 0 0 4px 4px;
  transform: rotate(-45deg);
  margin-bottom: 6px;
}
.snap {
  width: 138px;
  gap: 6px;
}
.icon-btn {
  width: 44px;
  height: 44px;
  color: #b3b3b3;
}
.icon-btn.pressed, .vbtn.pressed, .inc.pressed {
  color: #2d8ceb;
  background: #161616;
  border: 2px solid #303030;
  border-radius: 4px;
}
.icon-btn.pressed {
  margin-left: 6px;
  margin-right: 16px;
}
.fill-swatch {
  width: 48px;
  height: 36px;
  margin-left: 6px;
  background: #a9a6ad;
  border: 1px solid #bbb;
}
.stroke-link {
  margin-left: 24px;
  margin-right: 4px;
}
.px {
  margin-left: 22px;
}
.add-label {
  display: flex;
  align-items: center;
  gap: 8px;
  margin-left: 62px;
  padding-right: 50px;
}
.add-label svg, .add-cell svg {
  color: #b3b3b3;
}
.workspaces {
  flex: 1;
  display: flex;
  align-items: center;
  height: 100%;
  padding-top: 2px;
  padding-left: 44px;
  border-left: 2px solid #161616;
}
.ws-default, .ws-learn {
  margin-right: 86px;
}
.ws-standard {
  gap: 26px;
  margin-right: 46px;
}
.ws.more {
  margin-left: auto;
  margin-right: 18px;
  color: #b3b3b3;
}
.help {
  width: 424px;
  height: 100%;
  display: flex;
  align-items: center;
  padding-left: 10px;
  border-left: 2px solid #323232;
}
.field {
  display: flex;
  align-items: center;
  height: 38px;
  padding-left: 12px;
  background: #161616;
  border: 2px solid #303030;
  border-radius: 4px;
  color: #b3b3b3;
}
.field input {
  flex: 1;
  min-width: 0;
}
.help-field {
  flex: 1;
  margin-left: 26px;
  gap: 22px;
  padding-top: 4px;
  padding-left: 8px;
  border-right: none;
  color: #c0c0c0;
}

/* workspace */
.workspace {
  flex: 1;
  min-height: 0;
  display: grid;
  grid-template-columns: 640px minmax(0, 1fr) 366px;
  grid-template-rows: minmax(0, 1fr);
  gap: 8px;
}
.tabs {
  display: flex;
  height: 52px;
  flex: none;
  padding-left: 22px;
}
.tab {
  display: flex;
  align-items: center;
  gap: 20px;
  height: 52px;
  padding: 4px 2px 0;
  color: #c4c4c4;
  white-space: nowrap;
}
.tab.on {
  border-bottom: 4px solid #b8b8b8;
  padding-top: 8px;
}
.tab.off {
  margin-left: 40px;
  color: #9d9d9d;
}
.summary {
  display: flex;
  gap: 10px;
  padding: 16px 12px 0;
  height: 226px;
  flex: none;
}
.thumb {
  width: 96px;
  height: 130px;
  background: #e2e0e8;
  border: 2px solid #000;
}
.meta {
  margin-top: -3px;
  font-size: 20px;
}
.meta svg {
  display: inline-block;
  margin-left: 4px;
}
.project-search {
  margin: 0 12px 0 12px;
  flex: none;
}
.project-search + table {
  margin-top: 14px;
}
table {
  border-collapse: separate;
  border-spacing: 0;
  table-layout: fixed;
  width: 100%;
  flex: none;
}
th, td {
  padding: 0;
  text-align: left;
  font-weight: 400;
  overflow: hidden;
  white-space: nowrap;
}
thead th {
  height: 40px;
  background: linear-gradient(#111, #111) 0 7px / 2px 22px no-repeat #333;
  border-top: 2px solid #000;
  border-bottom: 2px solid #000;
  padding-top: 2px;
  padding-left: 10px;
  font-size: 18px;
  color: #a3a3a3;
}
thead th:first-child {
  background: #333;
}
.f-icon {
  width: 33px;
}
.f-tag {
  width: 44px;
}
.f-type {
  width: 76px;
}
.f-flow {
  width: 36px;
}
.files td {
  height: 38px;
  border-bottom: 2px solid #212121;
  padding-top: 2px;
  padding-left: 10px;
  vertical-align: middle;
}
.files td:first-child {
  overflow: visible;
  padding-left: 34px;
}
.files td:nth-child(2) {
  padding-left: 39px;
}
.files td:last-child {
  padding-left: 3px;
  background: #242424;
  border: none;
}
.files .selected td {
  background: #333;
}
.files .selected td:nth-child(2) {
  background: linear-gradient(#9e9e9e, #9e9e9e) 35px 0 / calc(100% - 39px) 100% no-repeat #333;
  color: #262626;
  font-weight: 600;
}
.files .selected td:last-child {
  background: #242424;
}
.chip {
  display: block;
  width: 20px;
  height: 20px;
  background: #a79577;
}
.chip.lilac {
  background: #aca9cc;
}
.files-space {
  flex: 1;
  border-bottom: 2px solid #000;
}
.project-foot {
  height: 34px;
  flex: none;
  display: flex;
  align-items: center;
  padding-left: 8px;
  gap: 20px;
}
.bpc {
  width: 90px;
  height: 30px;
  margin: 0 -6px;
  font-size: 18px;
  background: #1e1e1e;
  border: 1px solid #333;
  border-radius: 4px;
  color: #b0b0b0;
}
.track {
  width: 260px;
  height: 34px;
  background: #1f1f1f;
}
.thumbbar {
  width: 140px;
  height: 30px;
  border-radius: 15px;
  background: #343434;
}

/* viewer */
.viewer {
  border: 2px solid #3a85d8;
}
.viewer-tab {
  height: 52px;
  flex: none;
  display: flex;
  align-items: center;
  padding-left: 18px;
  color: #dcdcdc;
}
.close {
  width: 14px;
  color: #9d9d9d;
}
.tab-chip {
  margin-left: 18px;
}
.unlock {
  margin-left: 22px;
  margin-right: 18px;
}
.viewer-tab h2 {
  margin-right: 16px;
  font-weight: 500;
}
.crumbs {
  height: 54px;
  flex: none;
  padding: 6px 38px;
  border-bottom: 2px solid #000;
  box-shadow: inset 0 -2px #333;
}
.crumb {
  width: 138px;
  height: 36px;
  justify-content: flex-start;
  padding-left: 14px;
  background: #161616;
  border: 2px solid #303030;
  border-radius: 4px;
  color: #3f9be6;
}
.stage {
  flex: 1;
  min-height: 0;
  background: #e9e6ef;
}
.stage svg {
  width: 100%;
  height: 100%;
}
.viewer-foot {
  height: 52px;
  flex: none;
  display: flex;
  align-items: center;
  padding: 10px 10px 2px;
  background: linear-gradient(#181818, #181818) 0 8px / 100% 2px no-repeat;
}
.viewer-foot .sep {
  height: 30px;
  margin: 0 9px;
}
.select {
  display: flex;
  align-items: center;
  height: 38px;
  padding: 0 10px 0 12px;
  background: #1b1b1b;
  border: 2px solid #303030;
  border-radius: 4px;
  color: #cfcfcf;
}
.select select {
  flex: 1;
  min-width: 0;
  appearance: none;
}
.zoom-select {
  width: 138px;
  padding-left: 10px;
}
.res-select {
  width: 178px;
}
.vbtn {
  width: 44px;
  height: 38px;
  color: #b3b3b3;
}
.vbtn.dim {
  color: #444;
}
.exposure {
  margin: 0 22px 0 4px;
}
.timecode-btn {
  width: 138px;
  height: 38px;
  background: #1b1b1b;
  border: 2px solid #303030;
  border-radius: 4px;
}

/* right side */
.side {
  display: grid;
  grid-template-rows: 284px 700px minmax(0, 1fr);
  gap: 8px;
  min-width: 0;
}
.info-body {
  display: flex;
  margin: 14px 0 0 12px;
  padding: 0 0 14px 4px;
  border-bottom: 2px solid #323232;
}
.sample {
  width: 40px;
  height: 40px;
  margin-top: 22px;
  background: #a9a6ad;
  border: 2px solid #000;
}
.rgba, .xy {
  display: grid;
  grid-template-columns: 38px auto;
  grid-auto-rows: 26px;
  align-content: start;
}
.rgba {
  width: 138px;
  margin-left: 10px;
  border-right: 2px solid #303030;
}
.plus {
  margin: 46px 6px 0 20px;
}
.xy {
  grid-template-columns: 34px auto;
}
.info-text {
  padding: 6px 0 0 14px;
  line-height: 28px;
  white-space: nowrap;
}
.preview .tab {
  padding-top: 6px;
}
.transport {
  display: flex;
  justify-content: space-between;
  width: 216px;
  margin-left: 94px;
  padding-top: 22px;
  height: 60px;
  flex: none;
}
.transport button {
  height: 18px;
}
.preview-form {
  margin-left: 12px;
  border-top: 2px solid #323232;
  padding-top: 14px;
  display: flex;
  flex-direction: column;
  white-space: nowrap;
}
.preview-form > .select.tall {
  width: 338px;
  margin-top: 8px;
}
.include {
  display: flex;
  align-items: center;
  height: 38px;
  margin-top: 10px;
}
.include > span {
  width: 191px;
}
.inc {
  width: 42px;
  height: 38px;
  margin-right: 6px;
  color: #b3b3b3;
}
.inc svg {
  max-width: 38px;
}
.cache {
  margin: 5px 0 12px;
}
.preview-form .wide {
  margin: 8px 0;
  border-right: none;
  padding-right: 0;
  border-radius: 4px 0 0 4px;
}
.rates {
  display: flex;
  gap: 8px;
}
.rate {
  width: 132px;
}
.skip {
  width: 86px;
}
.reso {
  flex: 1;
}
.rates .select, .combo {
  margin-top: 8px;
  height: 38px;
}
.combo {
  display: flex;
  background: #161616;
  border: 2px solid #303030;
  border-radius: 4px;
  color: #cfcfcf;
}
.combo input {
  flex: 1;
  min-width: 0;
  padding-left: 12px;
}
.combo button {
  width: 36px;
  border-left: 2px solid #303030;
}
.full {
  padding: 2px 0 4px;
  height: 46px;
  border-bottom: 2px solid #323232;
}
.on-stop {
  padding: 12px 0 7px;
}

/* effects */
.effects-search {
  margin: 10px 0 4px 12px;
  border-right: none;
  flex: none;
}
.effect-list {
  flex: 1;
  min-height: 0;
  overflow: hidden;
  list-style: none;
  border-top: 2px solid #000;
  border-bottom: 2px solid #000;
  margin-left: 2px;
}
.effect-list li {
  height: 34px;
  padding: 0 0 0 12px;
  display: flex;
  align-items: center;
  border-bottom: 2px solid #222;
}
.effect-list li::before {
  content: "";
  width: 9px;
  height: 9px;
  margin-right: 11px;
  border: solid #b3b3b3;
  border-width: 2px 2px 0 0;
  transform: rotate(45deg);
  margin-left: -4px;
}
.effects-foot {
  height: 34px;
  flex: none;
  display: flex;
  justify-content: flex-end;
  padding: 0 4px;
}

/* timeline */
.timeline {
  flex: 0 0 404px;
  margin-top: 8px;
}
.tl-tabs {
  display: flex;
  height: 52px;
  flex: none;
  padding-left: 34px;
}
.tl-tab {
  display: flex;
  align-items: center;
  height: 52px;
  padding-top: 2px;
}
.gameboy {
  width: 234px;
  gap: 22px;
}
.current {
  color: #dcdcdc;
  width: 184px;
  border-bottom: 4px solid #b8b8b8;
  padding-top: 6px;
}
.current .chip {
  margin-left: 16px;
  margin-right: 22px;
}
.current svg {
  margin-left: auto;
  margin-right: 2px;
}
.tl-body {
  flex: 1;
  min-height: 0;
  display: grid;
  grid-template-columns: 1125px minmax(0, 1fr);
}
.layers, .graph {
  overflow: hidden;
  min-height: 0;
}
.tl-controls {
  height: 74px;
  display: flex;
  align-items: center;
  padding-top: 2px;
}
.clock {
  width: 202px;
  padding-top: 8px;
  padding-left: 22px;
  color: #1d6ca8;
  display: flex;
  flex-direction: column;
  font-size: 20px;
  line-height: 28px;
}
.clock strong {
  font-size: 30px;
  color: #3f9be6;
  padding-left: 4px;
}
.layer-search {
  width: 588px;
}
.tl-icons {
  flex: 1;
  display: flex;
  gap: 24px;
  padding-left: 28px;
  color: #b3b3b3;
}
.flow-btn {
  margin-right: 8px;
}
.graph-btn {
  margin-left: 12px;
}
.l-switch {
  width: 136px;
}
.l-tag {
  width: 64px;
}
.l-num {
  width: 66px;
}
.l-name {
  width: 260px;
}
.l-mode {
  width: 332px;
}
.l-parent {
  width: 234px;
}
.switches {
  display: flex;
  align-items: center;
  gap: 9px;
  padding-left: 3px;
}
.layer-table th:last-child {
  padding: 0;
}
.layer-table .tag-head {
  padding-left: 28px;
}
.layer-table th:nth-child(n+4) {
  padding-left: 12px;
}
.mode-head {
  display: grid;
  grid-template-columns: 152px 34px auto;
}
.layer-table td {
  height: 34px;
  border-bottom: 2px solid #202020;
}
.layer-table td > div {
  height: 32px;
  display: flex;
  align-items: center;
}
.layer-row td {
  background: #4a4a4a;
  border-bottom-color: #202020;
}
.layer-row .num, .name-cell input {
  font-weight: 600;
  color: #b5b5b5;
}
.layer-table .num {
  padding-left: 14px;
}
.cells {
  padding-left: 10px;
  gap: 4px;
  color: #b3b3b3;
}
.cell {
  width: 26px;
  height: 26px;
  background: #333;
  display: flex;
  align-items: center;
  justify-content: center;
}
.cell.dark {
  width: 28px;
  height: 28px;
  background: #1b1b1b;
}
.cell.solo {
  margin-left: 30px;
}
.label-cell {
  padding-left: 13px;
  gap: 7px;
}
.label-chip {
  width: 24px;
  height: 24px;
  background: #6b7ee0;
}
.name-cell {
  padding-left: 8px;
  gap: 8px;
}
.name-cell input {
  width: 222px;
  height: 32px;
  padding-left: 3px;
  border: 3px solid #a5a5a5;
  border-radius: 2px;
}
.mode-cell {
  padding-left: 8px;
  gap: 10px;
}
.select.flat {
  height: 30px;
  border: 1px solid #303030;
  border-radius: 0;
  padding: 0 10px 0 12px;
}
.blend {
  width: 140px;
}
.long {
  width: 314px;
  margin-left: 3px;
}
.parent-cell {
  padding-left: 11px;
  gap: 12px;
}
.parent {
  width: 182px;
}
.whip {
  padding-left: 37px;
}
.prop {
  gap: 15px;
  padding-top: 2px;
  white-space: nowrap;
}
.d1 {
  padding-left: 47px;
}
.d2 {
  padding-top: 0;
  padding-left: 81px;
}
.d3 {
  padding-left: 115px;
}
.d4 {
  padding-left: 174px;
  gap: 14px;
}
.picked {
  flex: 1;
  height: 32px;
  margin-left: -6px;
  padding: 4px 6px;
  background: #4c4c4c;
  color: #a8a8a8;
}
.add-cell {
  padding-top: 2px;
  padding-left: 248px;
  gap: 8px;
}
.dirs {
  padding-left: 12px;
  gap: 4px;
  color: #b3b3b3;
}
.dirs button {
  width: 32px;
  height: 28px;
  background: #161616;
}
.value {
  padding-left: 12px;
}
.link-box {
  width: 28px;
  height: 28px;
  margin-left: -4px;
  margin-right: 10px;
  background: #1b1b1b;
}

/* time graph */
.graph {
  position: relative;
  border-left: 1px solid #000;
  margin-top: 14px;
  padding-left: 15px;
  padding-right: 4px;
  border-top-left-radius: 10px;
}
.navigator {
  height: 20px;
  background: #666;
  border: solid #000;
  border-width: 2px 0;
  position: relative;
}
.grip {
  position: absolute;
  left: -15px;
  top: 0;
  bottom: 0;
  width: 12px;
  background: #2d8ceb;
  border-radius: 10px 0 0 10px;
}
.ruler {
  height: 38px;
}
.ticks {
  display: flex;
  margin: 0 -54px;
}
.ticks span {
  flex: 1;
  height: 38px;
  min-width: 0;
  text-align: center;
  font-size: 20px;
  line-height: 28px;
  background: linear-gradient(#8a8a8a, #8a8a8a) 50% 100% / 2px 10px no-repeat;
}
.ticks span:nth-child(odd) {
  background-size: 2px 15px;
}
.workarea {
  height: 34px;
  background: #5f5f5f;
  border: solid #000;
  border-width: 2px 0;
  position: relative;
}
.cached {
  height: 8px;
  background: #10be23;
  border-bottom: 2px solid #000;
}
.lane {
  height: 34px;
  margin-left: -15px;
  padding: 6px 0 0 8px;
  background: #333;
  border-bottom: 2px solid #202020;
}
.lane.bar {
  margin-left: 0;
  background: linear-gradient(#aeb0e4 2px, #7482d4 3px, #475dc8);
}
.playhead {
  position: absolute;
  left: 4px;
  top: 30px;
  bottom: 0;
  background: linear-gradient(#2d8ceb, #2d8ceb) 50% 0 / 2px 100% no-repeat;
}
.tl-foot {
  height: 14px;
  flex: none;
  display: flex;
  align-items: flex-start;
  overflow: hidden;
  border-top: 2px solid #000;
}
.tl-foot button {
  width: 38px;
  height: 32px;
}
.tl-foot button:first-child {
  margin-left: 4px;
}
.tl-foot .toggle {
  width: 324px;
  margin-left: 414px;
  border: 2px solid #303030;
  background: #222;
}
.zoom-slider {
  width: 484px;
  padding-left: 286px;
}
.tl-track {
  flex: 1;
  height: 14px;
  background: #1d1d1d;
}
```
